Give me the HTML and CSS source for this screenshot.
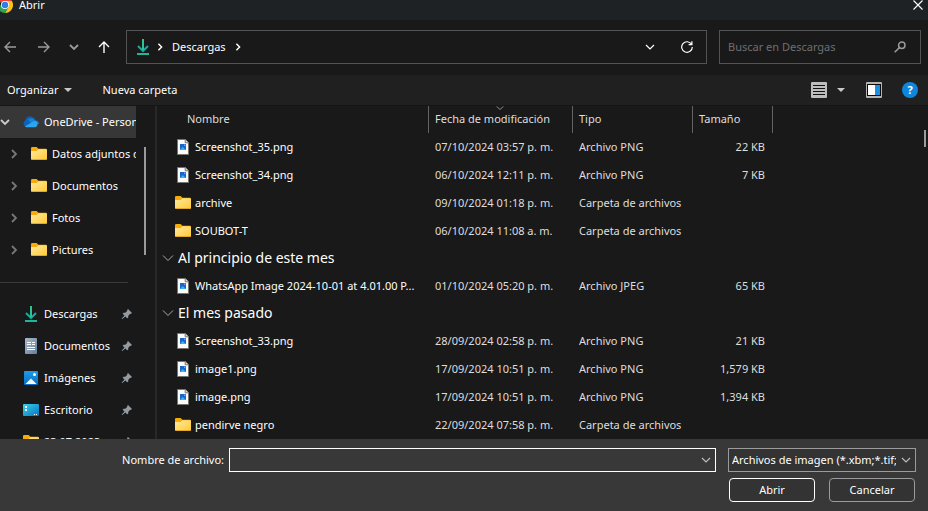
FILE: index.html
```html
<!DOCTYPE html>
<html lang="es">
<head>
<meta charset="utf-8">
<title>Abrir</title>
<link rel="stylesheet" href="styles.css">
</head>
<body>
<svg class="defs" aria-hidden="true">
  <defs>
    <linearGradient id="gold" x1="0" y1="0" x2="1" y2="1"><stop offset="0" stop-color="#ffe9a0"/><stop offset="1" stop-color="#ffc934"/></linearGradient>
    <linearGradient id="desk" x1="0" y1="0" x2="1" y2="1"><stop offset="0" stop-color="#35d3e6"/><stop offset="1" stop-color="#0a72c4"/></linearGradient>
    <linearGradient id="sky" x1="0" y1="0" x2="0" y2="1"><stop offset="0" stop-color="#1f9be8"/><stop offset="1" stop-color="#0a6cc4"/></linearGradient>
    <linearGradient id="slate" x1="0" y1="0" x2="1" y2="1"><stop offset="0" stop-color="#a9bacb"/><stop offset="1" stop-color="#64809c"/></linearGradient>
  </defs>
  <symbol id="folder" viewBox="0 0 16 16">
    <path d="M0 2.2Q0 1 1.2 1H5.6L7.4 2.7H14.8Q16 2.7 16 3.9V8H0Z" fill="#f5ac0a"/>
    <path d="M0 5H5.6L7.4 3.2H15Q16 3.2 16 4.2V12.8Q16 14 14.8 14H1.2Q0 14 0 12.8Z" fill="url(#gold)"/>
    <path d="M.2 13.3Q.5 14 1.2 14H14.8Q15.6 14 15.9 13.3Z" fill="#d99a1c"/>
  </symbol>
  <symbol id="picture" viewBox="0 0 16 16">
    <path d="M2.5.5H10.3L13.5 3.7V15.5H2.5Z" fill="#fbfbfb" stroke="#77756f"/>
    <path d="M10.2.5V3.8H13.5" fill="#d8d8d8" stroke="#77756f"/>
    <rect x="5" y="5" width="6" height="6" fill="#1769c6"/>
    <path d="M5 11 7.7 8 11 11Z" fill="#35b3f2"/>
    <rect x="9" y="5.5" width="1.5" height="1.5" fill="#9a8ff0"/>
  </symbol>
  <symbol id="download" viewBox="0 0 16 16">
    <path d="M3 7 8 12 13 7" fill="none" stroke="#17a8a4" stroke-width="2"/>
    <path d="M7 0H9V11H7Z" fill="#2cc58e"/>
    <rect x="2" y="14" width="12" height="2" fill="#1fb795"/>
  </symbol>
  <symbol id="pin" viewBox="0 0 12 12">
    <path d="M7 1 11 5 9.7 6 9.2 5.8 7.3 7.8 7.2 9.7 6.2 10.3 4.3 8.4 1.3 11H.8V10.5L3.5 7.6 1.7 5.8 2.4 4.8 4.3 4.7 6.3 2.8 6.1 2Z" fill="#929ba2"/>
  </symbol>
  <symbol id="right" viewBox="0 0 10 10"><path d="M3 1 7 5 3 9" fill="none" stroke="currentColor" stroke-width="1.8"/></symbol>
  <symbol id="down" viewBox="0 0 10 10"><path d="M1 3 5 7 9 3" fill="none" stroke="currentColor" stroke-width="1.2"/></symbol>
  <symbol id="down-bold" viewBox="0 0 10 10"><path d="M1 3 5 7 9 3" fill="none" stroke="currentColor" stroke-width="1.8"/></symbol>
  <symbol id="arrow" viewBox="0 0 12 12"><path d="M12 6H1M6 1 1 6 6 11" fill="none" stroke="currentColor" stroke-width="1.4"/></symbol>
  <symbol id="caret" viewBox="0 0 8 4"><path d="M0 0H8L4 4Z" fill="currentColor"/></symbol>
</svg>

<header class="titlebar">
  <svg class="chrome" viewBox="0 0 16 16" aria-hidden="true">
    <path d="M8 8 1.07 4A8 8 0 0 1 14.93 4Z" fill="#e94335"/>
    <path d="M8 4H14.93A8 8 0 0 1 8 16L11.46 10Z" fill="#fbc116"/>
    <path d="M1.07 4 4.54 10 11.46 10 8 16A8 8 0 0 1 1.07 4Z" fill="#31a350"/>
    <circle cx="8" cy="8" r="4" fill="#fff"/><circle cx="8" cy="8" r="3.2" fill="#2f7de9"/>
  </svg>
  <h1>Abrir</h1>
  <button class="close" aria-label="Cerrar"><svg viewBox="0 0 10 10"><path d="M.5.5 9.5 9.5M9.5.5.5 9.5" stroke="currentColor" stroke-width="1.1"/></svg></button>
</header>

<nav class="navbar">
  <div class="history">
    <button class="dim back" aria-label="Atrás"><svg class="i12"><use href="#arrow"/></svg></button>
    <button class="dim" aria-label="Adelante"><svg class="i12 flip"><use href="#arrow"/></svg></button>
    <button class="dim" aria-label="Recientes"><svg class="i10"><use href="#down-bold"/></svg></button>
    <button aria-label="Subir"><svg class="i12 up"><use href="#arrow"/></svg></button>
  </div>
  <div class="address">
    <svg class="i16"><use href="#download"/></svg>
    <svg class="i8"><use href="#right"/></svg>
    <a href="#descargas">Descargas</a>
    <svg class="i8"><use href="#right"/></svg>
    <button class="history-toggle" aria-label="Ubicaciones anteriores"><svg class="i10"><use href="#down"/></svg></button>
    <button aria-label="Actualizar"><svg class="i12" viewBox="0 0 12 12"><path d="M10.6 3.4A5.3 5.3 0 1 0 11.3 6M10.9.3V3.6H7.6" fill="none" stroke="currentColor" stroke-width="1.2"/></svg></button>
  </div>
  <div class="search">
    <input type="text" aria-label="Buscar en Descargas" placeholder="Buscar en Descargas">
    <svg class="i12" viewBox="0 0 12 12"><circle cx="7.8" cy="4.2" r="3.2" fill="none" stroke="currentColor" stroke-width="1.5"/><path d="M5.5 6.5.7 11.3" stroke="currentColor" stroke-width="1.6"/></svg>
  </div>
</nav>

<div class="toolbar">
  <button>Organizar <svg class="caret"><use href="#caret"/></svg></button>
  <button>Nueva carpeta</button>
  <div class="views">
    <button aria-label="Vista"><svg class="i16" viewBox="0 0 16 16"><rect width="16" height="16" rx="1" fill="#bdbdbd"/><path d="M2 3.5H14M2 6.5H14M2 9.5H14M2 12.5H14" stroke="#111"/></svg></button>
    <button aria-label="Más opciones"><svg class="caret"><use href="#caret"/></svg></button>
    <button class="preview" aria-label="Panel de vista previa"><svg class="i16" viewBox="0 0 16 16"><rect width="16" height="16" rx="1" fill="#b4b4b4"/><rect x="1" y="2" width="14" height="12" fill="#0b0b0b"/><rect x="2" y="3" width="7" height="10" fill="#fff"/><rect x="9" y="3" width="5" height="10" fill="#1b8fe0"/></svg></button>
    <button class="help" aria-label="Ayuda">?</button>
  </div>
</div>

<main class="content">
  <aside class="sidebar">
    <ul class="tree">
      <li class="root"><svg class="i10"><use href="#down-bold"/></svg><svg class="i16" viewBox="0 0 16 16"><path d="M3.4 13A3.6 3.6 0 0 1 2.2 6.4 5.2 5.2 0 0 1 12.2 6.2L8 13Z" fill="#0a63b8"/><path d="M5 5.6A5.2 5.2 0 0 1 12.3 6.6 3.4 3.4 0 0 1 16 10L9 10.5Z" fill="#1482d8"/><path d="M2 12.3 10.2 7.6A3.8 3.8 0 0 1 12.5 7 3.4 3.4 0 0 1 12.6 13.2H3.6Q2.6 13.2 2 12.3Z" fill="#2aa5ee"/></svg><span>OneDrive - Personal</span></li>
      <li><svg class="i10"><use href="#right"/></svg><svg class="i16"><use href="#folder"/></svg><span>Datos adjuntos de correo</span></li>
      <li><svg class="i10"><use href="#right"/></svg><svg class="i16"><use href="#folder"/></svg><span>Documentos</span></li>
      <li><svg class="i10"><use href="#right"/></svg><svg class="i16"><use href="#folder"/></svg><span>Fotos</span></li>
      <li><svg class="i10"><use href="#right"/></svg><svg class="i16"><use href="#folder"/></svg><span>Pictures</span></li>
    </ul>
    <hr>
    <ul class="quick">
      <li><svg class="i16"><use href="#download"/></svg><span>Descargas</span><svg class="i12"><use href="#pin"/></svg></li>
      <li><svg class="i16" viewBox="0 0 16 16"><rect x="2" width="12" height="16" rx="1" fill="url(#slate)"/><path d="M4 4.5H8M4 6.5H8M9 4.5H12M9 6.5H12M4 9.5H12M4 11.5H12" stroke="#fff"/></svg><span>Documentos</span><svg class="i12"><use href="#pin"/></svg></li>
      <li><svg class="i16" viewBox="0 0 16 16"><rect x="1" y="1" width="14" height="14" rx="1" fill="url(#sky)"/><path d="M2.5 14 8 8.5 13.5 14Z" fill="#f4faff"/><circle cx="11.5" cy="4.5" r="1.5" fill="#fff"/></svg><span>Imágenes</span><svg class="i12"><use href="#pin"/></svg></li>
      <li><svg class="i16" viewBox="0 0 16 16"><rect y="2" width="16" height="12" rx="1" fill="url(#desk)"/><path d="M2 4H4V6H2ZM2 7H4V9H2ZM11 12H12V13H11ZM13 12H14V13H13Z" fill="#fff"/></svg><span>Escritorio</span><svg class="i12"><use href="#pin"/></svg></li>
      <li><svg class="i16"><use href="#folder"/></svg><span>23.07.2023</span><svg class="i12"><use href="#pin"/></svg></li>
    </ul>
    <div class="thumb side-thumb"></div>
  </aside>

  <section class="files">
    <table>
      <colgroup><col class="c-name"><col class="c-date"><col class="c-type"><col class="c-size"><col></colgroup>
      <thead>
        <tr><th>Nombre</th><th class="sorted">Fecha de modificación<svg class="sort"><use href="#down"/></svg></th><th>Tipo</th><th>Tamaño</th><th></th></tr>
      </thead>
      <tbody>
        <tr><td><svg class="i16"><use href="#picture"/></svg>Screenshot_35.png</td><td>07/10/2024 03:57 p. m.</td><td>Archivo PNG</td><td>22 KB</td><td></td></tr>
        <tr><td><svg class="i16"><use href="#picture"/></svg>Screenshot_34.png</td><td>06/10/2024 12:11 p. m.</td><td>Archivo PNG</td><td>7 KB</td><td></td></tr>
        <tr><td><svg class="i16"><use href="#folder"/></svg>archive</td><td>09/10/2024 01:18 p. m.</td><td>Carpeta de archivos</td><td></td><td></td></tr>
        <tr><td><svg class="i16"><use href="#folder"/></svg>SOUBOT-T</td><td>06/10/2024 11:08 a. m.</td><td>Carpeta de archivos</td><td></td><td></td></tr>
        <tr class="group"><th colspan="5"><svg class="i12" viewBox="0 0 12 12"><path d="M1 3.5 6 8.5 11 3.5" fill="none" stroke="currentColor"/></svg>Al principio de este mes</th></tr>
        <tr><td><svg class="i16"><use href="#picture"/></svg>WhatsApp Image 2024-10-01 at 4.01.00 P...</td><td>01/10/2024 05:20 p. m.</td><td>Archivo JPEG</td><td>65 KB</td><td></td></tr>
        <tr class="group"><th colspan="5"><svg class="i12" viewBox="0 0 12 12"><path d="M1 3.5 6 8.5 11 3.5" fill="none" stroke="currentColor"/></svg>El mes pasado</th></tr>
        <tr><td><svg class="i16"><use href="#picture"/></svg>Screenshot_33.png</td><td>28/09/2024 02:58 p. m.</td><td>Archivo PNG</td><td>21 KB</td><td></td></tr>
        <tr><td><svg class="i16"><use href="#picture"/></svg>image1.png</td><td>17/09/2024 10:51 p. m.</td><td>Archivo PNG</td><td>1,579 KB</td><td></td></tr>
        <tr><td><svg class="i16"><use href="#picture"/></svg>image.png</td><td>17/09/2024 10:51 p. m.</td><td>Archivo PNG</td><td>1,394 KB</td><td></td></tr>
        <tr><td><svg class="i16"><use href="#folder"/></svg>pendirve negro</td><td>22/09/2024 07:58 p. m.</td><td>Carpeta de archivos</td><td></td><td></td></tr>
      </tbody>
    </table>
    <div class="thumb file-thumb"></div>
  </section>
</main>

<footer class="footer">
  <div class="fields">
    <label for="filename">Nombre de archivo:</label>
    <div class="combo"><input id="filename" type="text"><svg class="i10"><use href="#down"/></svg></div>
    <div class="filter"><select aria-label="Tipo de archivo"><option>Archivos de imagen (*.xbm;*.tif;*.jpg)</option></select><svg class="i10"><use href="#down"/></svg></div>
  </div>
  <div class="actions">
    <button class="primary">Abrir</button>
    <button>Cancelar</button>
  </div>
</footer>
</body>
</html>
```
FILE: styles.css
```css
* { box-sizing: border-box; }

body {
  margin: 0;
  height: 100vh;
  display: flex;
  flex-direction: column;
  overflow: hidden;
  background: #191919;
  color: #fff;
  font: 11px/16px "Noto Sans", "Open Sans", sans-serif;
}

button, input, select { font: inherit; color: inherit; }
button { display: flex; align-items: center; justify-content: center; padding: 0; border: 0; background: none; }
svg { display: block; flex: none; }
ul { margin: 0; padding: 0; list-style: none; }
a { color: inherit; text-decoration: none; }

.defs { position: absolute; width: 0; height: 0; }
.i8 { width: 8px; height: 8px; }
.i10 { width: 10px; height: 10px; }
.i12 { width: 12px; height: 12px; }
.i16 { width: 16px; height: 16px; }
.flip { transform: scaleX(-1); }
.up { transform: rotate(90deg); }
.caret { width: 8px; height: 4px; color: #c8c8c8; }

.titlebar {
  flex: none;
  display: flex;
  align-items: center;
  height: 20px;
  padding: 0 5px 10px 0;
  background: #1e2224;
}
.chrome { width: 16px; height: 16px; margin-left: -3px; }
.titlebar h1 { flex: 1; margin: 0 0 0 6px; font-size: 11px; font-weight: 400; }
.close svg { width: 10px; height: 10px; }

.navbar {
  flex: none;
  display: flex;
  gap: 12px;
  padding: 10px 7px 11px 4px;
}
.history { display: flex; align-items: center; gap: 18px; width: 110px; }
.history button { width: 12px; }
.history .dim { color: #9a9a9a; }
.history .back { margin-right: 4px; }
.address, .search {
  display: flex;
  align-items: center;
  height: 34px;
  border: 1px solid #535353;
}
.address { flex: 1; gap: 8px; padding: 0 13px 0 8px; }
.address > .i16 { margin-right: -3px; }
.history-toggle { margin-left: auto; margin-right: 18px; }
.search { width: 202px; padding: 0 14px 0 8px; color: #9a9a9a; }
.search input { flex: 1; min-width: 0; padding: 0; border: 0; outline: 0; background: none; }
.search input::placeholder { color: #6f6f6f; opacity: 1; }

.toolbar {
  flex: none;
  display: flex;
  align-items: center;
  gap: 30px;
  height: 31px;
  padding: 0 10px 0 7px;
  border-bottom: 1px solid #151515;
  background: #202020;
}
.toolbar button { gap: 6px; }
.views { display: flex; align-items: center; margin-left: auto; }
.views button + button { margin-left: 10px; }
.views button.preview { margin-left: 21px; }
.views button.help {
  width: 16px;
  height: 16px;
  margin-left: 20px;
  border-radius: 50%;
  background: #0d86dc;
  font-weight: 700;
}

.content { flex: 1; display: flex; min-height: 0; }

.sidebar {
  position: relative;
  flex: none;
  width: 157px;
  padding-right: 19px;
  border-right: 2px solid #282828;
  overflow: hidden;
}
.sidebar li {
  display: flex;
  align-items: center;
  height: 32px;
  overflow: hidden;
  white-space: nowrap;
}
.tree li { gap: 5px; padding-left: 9px; }
.tree li > .i10 { margin-right: 7px; color: #777; }
.tree li.root { padding-left: 0; background: #373737; }
.tree li.root > .i10 { margin-right: 8px; color: #ccc; }
.sidebar hr { margin: 16px 8px 15px 0; border: 0; border-top: 1px solid #3a3a3a; }
.quick li { gap: 5px; padding: 0 3px 0 23px; }
.quick span { flex: 1; }

.thumb { position: absolute; width: 2px; background: #9a9a9a; }
.side-thumb { right: 9px; top: 41px; height: 108px; }
.file-thumb { right: 2px; top: 24px; height: 17px; }

.files { position: relative; flex: 1; min-width: 0; overflow: hidden; }
.files table { width: 100%; table-layout: fixed; border-collapse: separate; border-spacing: 0; }
.c-name { width: 271px; }
.c-date { width: 144px; }
.c-type { width: 120px; }
.c-size { width: 80px; }
.files th, .files td { padding: 0 0 0 6px; font-weight: 400; text-align: left; white-space: nowrap; color: #dedede; }
.files thead th { padding-bottom: 2px; border-left: 1px solid #636363; }
.files thead th:first-child { padding-left: 30px; border-left: 0; }
.files thead tr { height: 27px; }
.sorted { position: relative; }
.sort { position: absolute; top: -2px; left: 67px; width: 8px; height: 8px; color: #999; }
.files tbody td { height: 28px; padding-left: 7px; }
.files tbody td:first-child { padding-left: 18px; color: #fff; }
.files td:nth-child(4) { padding-right: 7px; text-align: right; }
.files td svg { display: inline-block; margin-right: 4px; vertical-align: -4px; }
.files .group th { height: 27px; padding: 0 0 2px 5px; font-size: 14px; line-height: 20px; color: #fff; }
.group svg { display: inline-block; margin-right: 4px; vertical-align: -1px; color: #aaa; }

.footer { flex: none; padding: 9px 12px 9px; background: #383838; }
.fields { display: flex; align-items: center; }
.fields label { width: 217px; padding-right: 5px; text-align: right; }
.combo, .filter {
  display: flex;
  align-items: center;
  height: 24px;
  padding-right: 4px;
  border: 1px solid #fff;
}
.combo { flex: 1; }
.combo input { flex: 1; min-width: 0; border: 0; outline: 0; background: none; }
.filter { width: 188px; margin-left: 12px; border-color: #9b9b9b; background: #333; }
.filter select { flex: 1; min-width: 0; margin-right: 5px; padding: 0 0 0 3px; border: 0; appearance: none; background: none; overflow: hidden; text-overflow: clip; }
.fields svg { color: #bbb; }
.actions { display: flex; justify-content: flex-end; gap: 14px; margin-top: 6px; padding-right: 1px; }
.actions button { width: 86px; height: 24px; border: 1px solid #9b9b9b; border-radius: 4px; background: #333; }
.actions .primary { border-color: #fff; }
```
